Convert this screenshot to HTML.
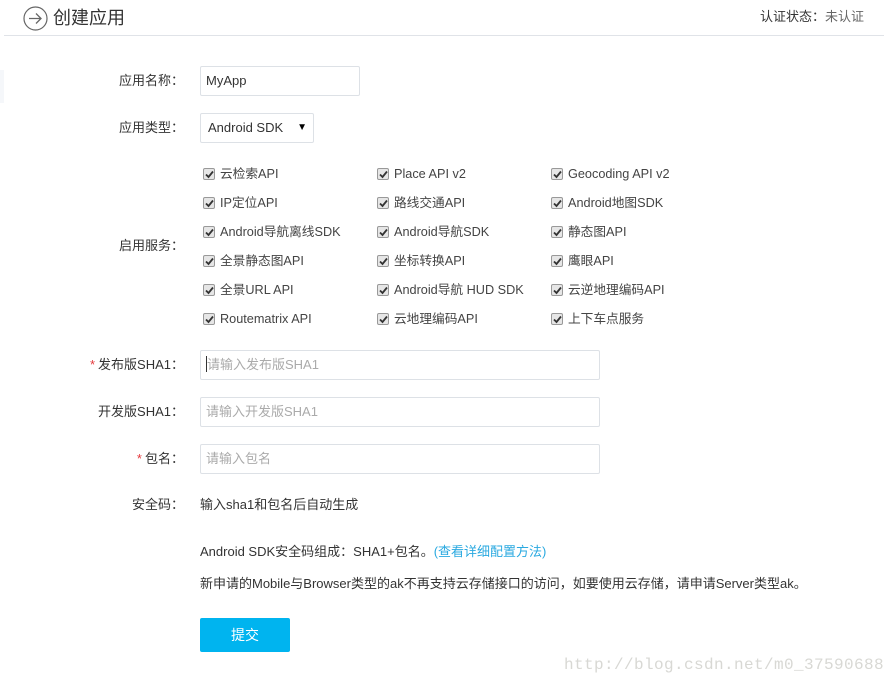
<!DOCTYPE html>
<html><head><meta charset="utf-8"><style>
*{margin:0;padding:0;box-sizing:border-box}
body{width:896px;height:686px;background:#fff;position:relative;overflow:hidden;font-family:"Liberation Sans","Noto Sans CJK SC",sans-serif;font-size:13px;color:#333}
.a{position:absolute;white-space:nowrap}
.lbl{position:absolute;right:712px;white-space:nowrap;line-height:16px}
.star{color:#e4393c;margin-right:3px}
.inp{position:absolute;left:200px;border:1px solid #dde1e6;border-radius:2px;background:#fff;padding-left:5px;color:#aaa;line-height:28px;font-size:13px}
.cb{position:absolute;width:12px;height:12px;border:1px solid #999;border-radius:2px;background:#e6e6e6}
.cb svg{position:absolute;left:1px;top:1px}
.ct{position:absolute;line-height:14px;white-space:nowrap;color:#444;font-size:12.7px}
</style></head><body>
<svg class="a" style="left:23px;top:6px" width="25" height="25" viewBox="0 0 25 25"><circle cx="12.5" cy="12.5" r="11.5" fill="none" stroke="#666" stroke-width="1.2"/><path d="M6 12.5H18M13 7.5L18 12.5L13 17.5" fill="none" stroke="#666" stroke-width="1.3"/></svg>
<div class="a" style="left:53px;top:6px;font-size:18px;color:#333;line-height:24px">创建应用</div>
<div class="a" style="right:32px;top:9px;line-height:16px;color:#333">认证状态：<span style="color:#666">未认证</span></div>
<div class="a" style="left:4px;top:35px;width:880px;height:1px;background:#e0e3e8"></div>
<div class="a" style="left:0;top:70px;width:4px;height:33px;background:#f5f7fa"></div>

<div class="lbl" style="top:73px">应用名称：</div>
<div class="inp" style="top:66px;width:160px;height:30px;color:#333">MyApp</div>
<div class="lbl" style="top:120px">应用类型：</div>
<div class="inp" style="top:113px;width:114px;height:30px;color:#333;padding-left:7px">Android SDK<span style="position:absolute;right:6px;top:0;font-size:10px;color:#000">▼</span></div>
<div class="lbl" style="top:238px">启用服务：</div>

<div id="cbs"></div>

<div class="lbl" style="top:357px"><span class="star">*</span>发布版SHA1：</div>
<div class="inp" style="top:350px;width:400px;height:30px"><span style="display:inline-block;width:1px;height:16px;background:#333;vertical-align:-3px"></span>请输入发布版SHA1</div>
<div class="lbl" style="top:404px">开发版SHA1：</div>
<div class="inp" style="top:397px;width:400px;height:30px">请输入开发版SHA1</div>
<div class="lbl" style="top:451px"><span class="star">*</span>包名：</div>
<div class="inp" style="top:444px;width:400px;height:30px">请输入包名</div>
<div class="lbl" style="top:497px">安全码：</div>
<div class="a" style="left:200px;top:497px;line-height:16px">输入sha1和包名后自动生成</div>
<div class="a" style="left:200px;top:544px;line-height:16px">Android SDK安全码组成：SHA1+包名。<span style="color:#2aa9e0">(查看详细配置方法)</span></div>
<div class="a" style="left:200px;top:576px;line-height:16px">新申请的Mobile与Browser类型的ak不再支持云存储接口的访问，如要使用云存储，请申请Server类型ak。</div>
<div class="a" style="left:200px;top:618px;width:90px;height:34px;background:#00b4ef;border-radius:2px;color:#fff;font-size:14px;text-align:center;line-height:34px">提交</div>
<div class="a" style="left:564px;top:655px;font-family:'Liberation Mono',monospace;font-size:16px;color:#d8d8d4;line-height:20px;letter-spacing:0.4px">http://blog.csdn.net/m0_37590688</div>
<script>
var items=[["云检索API","Place API v2","Geocoding API v2"],["IP定位API","路线交通API","Android地图SDK"],["Android导航离线SDK","Android导航SDK","静态图API"],["全景静态图API","坐标转换API","鹰眼API"],["全景URL API","Android导航 HUD SDK","云逆地理编码API"],["Routematrix API","云地理编码API","上下车点服务"]];
var xs=[203,377,551],h="";
items.forEach(function(r,i){r.forEach(function(t,j){var y=168+i*29;
h+='<div class="cb" style="left:'+xs[j]+'px;top:'+y+'px"><svg width="9" height="9" viewBox="0 0 9 9"><path d="M1 4.5L3.5 7L8 1.5" fill="none" stroke="#333" stroke-width="1.8"/></svg></div><div class="ct" style="left:'+(xs[j]+17)+'px;top:'+(y-1)+'px">'+t+'</div>';});});
document.getElementById("cbs").innerHTML=h;
</script>
</body></html>
